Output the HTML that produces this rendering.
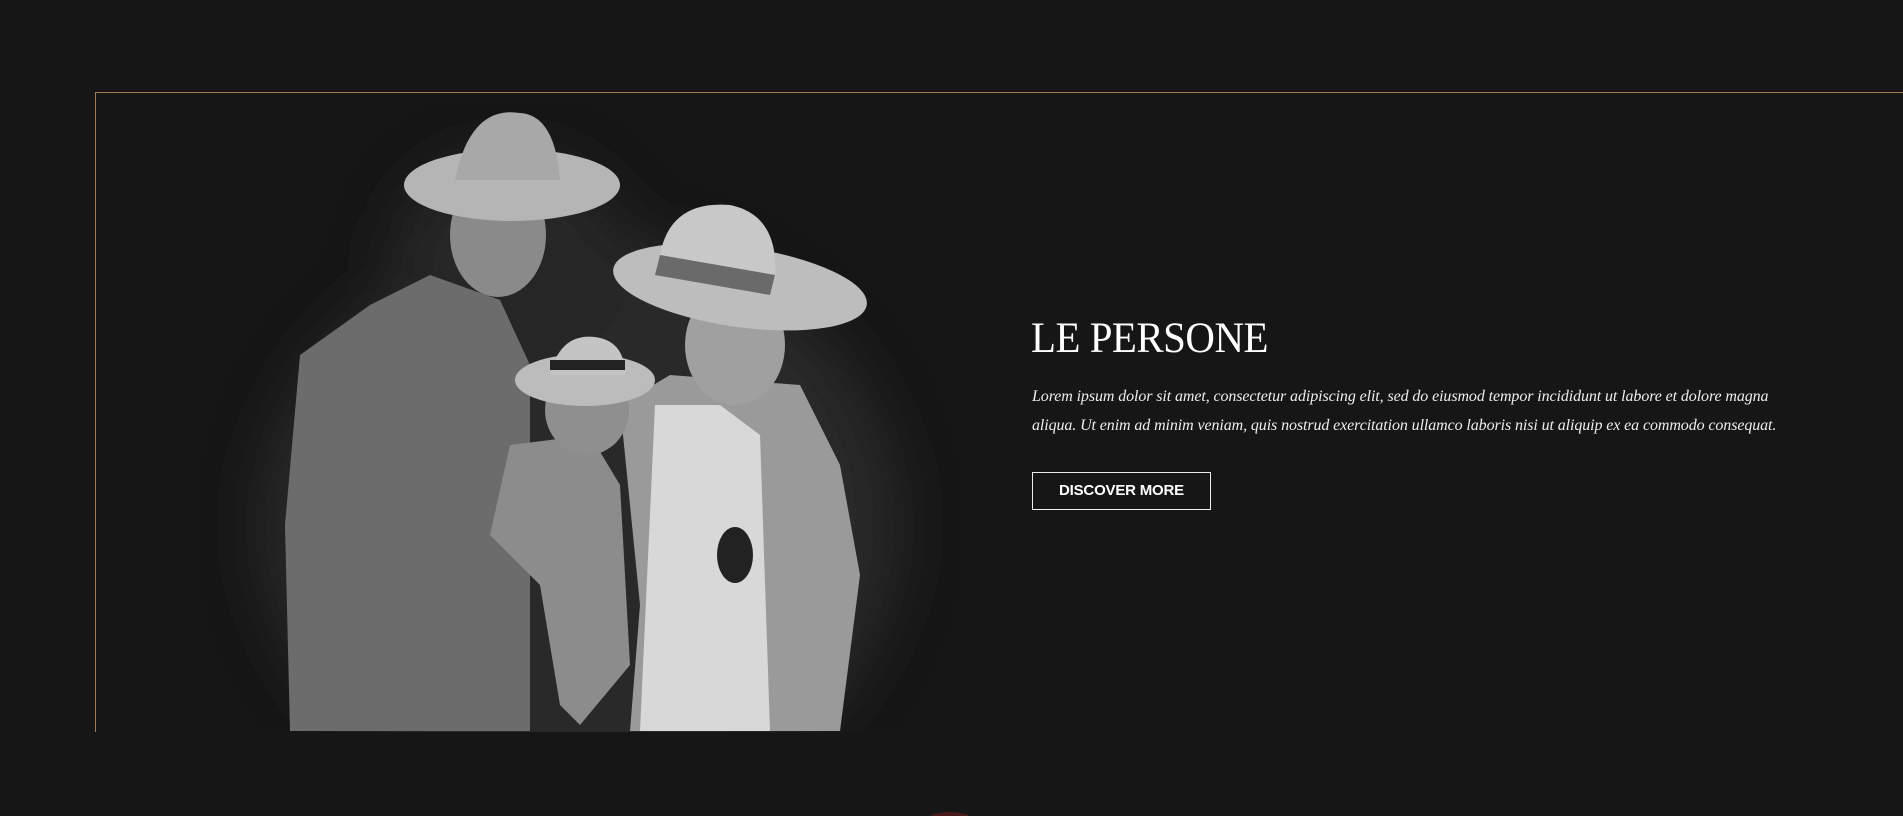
<!DOCTYPE html>
<html><head><meta charset="utf-8"><style>
html,body{margin:0;padding:0;background:#161616;width:1903px;height:816px;overflow:hidden;position:relative;font-family:"Liberation Serif",serif}
.frame{position:absolute;left:95px;top:92px;width:1808px;height:639px;border-top:1px solid #a07e55;border-left:1px solid #a07e55}
h1{position:absolute;left:1031px;top:314px;margin:0;font-weight:normal;font-size:43px;color:#fff;letter-spacing:-0.5px;transform:scaleX(0.95);transform-origin:left}
.p{position:absolute;left:1032px;top:382px;color:#eee;font-style:italic;font-size:16px;line-height:29px;white-space:nowrap;letter-spacing:-0.1px}
.btn{position:absolute;left:1032px;top:472px;width:177px;height:36px;border:1px solid #eee;color:#fff;font-family:"Liberation Sans",sans-serif;font-weight:bold;font-size:15px;line-height:36px;text-align:center;letter-spacing:-0.2px}
</style></head><body>
<div class="frame"></div>
<svg style="position:absolute;left:200px;top:105px" width="760" height="627" viewBox="0 0 760 627">
<defs>
<filter id="b" x="-30%" y="-30%" width="160%" height="160%"><feGaussianBlur stdDeviation="30"/></filter>
</defs>
<g filter="url(#b)" opacity="0.7"><ellipse cx="380" cy="420" rx="320" ry="290" fill="#333"/><ellipse cx="310" cy="160" rx="120" ry="110" fill="#2e2e2e"/></g>
<path d="M90 626 L85 420 L100 250 L170 200 L230 170 L300 195 L330 260 L330 626 Z" fill="#6c6c6c"/>
<ellipse cx="298" cy="130" rx="48" ry="62" fill="#8a8a8a"/>
<ellipse cx="312" cy="80" rx="108" ry="36" fill="#b5b5b5"/>
<path d="M255 75 Q270 0 320 8 Q355 10 360 75 Z" fill="#a8a8a8"/>
<path d="M430 626 L440 500 L420 300 L470 270 L600 280 L640 360 L660 470 L640 626 Z" fill="#9a9a9a"/>
<path d="M455 300 L520 300 L560 330 L570 626 L440 626 Z" fill="#d8d8d8"/>
<ellipse cx="535" cy="240" rx="50" ry="60" fill="#a0a0a0"/>
<ellipse cx="540" cy="182" rx="128" ry="40" fill="#bdbdbd" transform="rotate(8 540 182)"/>
<path d="M460 150 Q470 95 530 100 Q580 110 575 175 Z" fill="#c8c8c8"/>
<path d="M460 150 L575 170 L570 190 L455 170 Z" fill="#6a6a6a"/>
<ellipse cx="535" cy="450" rx="18" ry="28" fill="#222"/>
<path d="M290 430 L310 340 L390 330 L420 380 L430 560 L380 620 L360 600 L340 480 Z" fill="#8c8c8c"/>
<ellipse cx="387" cy="305" rx="42" ry="45" fill="#8f8f8f"/>
<ellipse cx="385" cy="275" rx="70" ry="26" fill="#bcbcbc"/>
<path d="M350 270 Q360 228 395 232 Q425 236 425 270 Z" fill="#c4c4c4"/>
<rect x="350" y="255" width="75" height="10" fill="#222"/>
</svg>
<h1>LE PERSONE</h1>
<div class="p"><div>Lorem ipsum dolor sit amet, consectetur adipiscing elit, sed do eiusmod tempor incididunt ut labore et dolore magna</div><div>aliqua. Ut enim ad minim veniam, quis nostrud exercitation ullamco laboris nisi ut aliquip ex ea commodo consequat.</div></div>
<div class="btn">DISCOVER MORE</div>
<div style="position:absolute;left:925px;top:812px;width:50px;height:20px;border-radius:50%;background:#4a1a1a"></div>
</body></html>
